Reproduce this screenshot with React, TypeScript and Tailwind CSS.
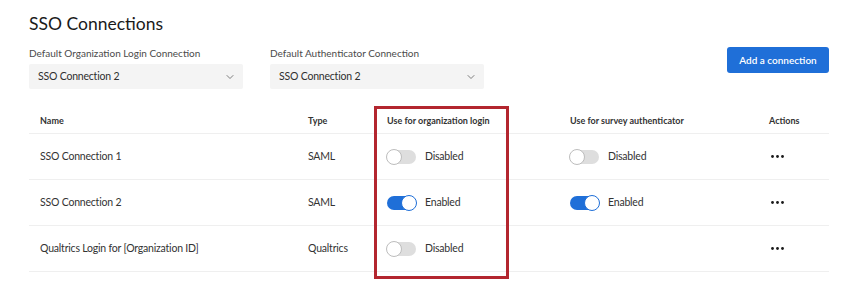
import { ChevronDown } from 'lucide-react'

type Row = {
  name: string
  type: string
  org: boolean
  survey: boolean | null
}

const rows: Row[] = [
  { name: 'SSO Connection 1', type: 'SAML', org: false, survey: false },
  { name: 'SSO Connection 2', type: 'SAML', org: true, survey: true },
  { name: 'Qualtrics Login for [Organization ID]', type: 'Qualtrics', org: false, survey: null },
]

function Toggle({ on }: { on: boolean }) {
  return (
    <div className="flex items-center gap-[9px]">
      <div
        className={
          on
            ? 'relative h-[14px] w-[29px] rounded-full bg-[#1f6fd8]'
            : 'relative h-[14px] w-[29px] rounded-full bg-[#dedede]'
        }
      >
        <div
          className={
            on
              ? 'absolute top-[-1px] right-[-1px] h-[16px] w-[16px] rounded-full border border-[#1f6fd8] bg-white'
              : 'absolute top-[-1px] left-[-1px] h-[16px] w-[16px] rounded-full border border-[#bdbdbd] bg-white'
          }
        />
      </div>
      <span>{on ? 'Enabled' : 'Disabled'}</span>
    </div>
  )
}

function Dots() {
  return (
    <svg width="13" height="3" viewBox="0 0 13 3" className="ml-[2px]">
      <circle cx="1.5" cy="1.5" r="1.4" fill="#1a1a1a" />
      <circle cx="6.5" cy="1.5" r="1.4" fill="#1a1a1a" />
      <circle cx="11.5" cy="1.5" r="1.4" fill="#1a1a1a" />
    </svg>
  )
}

function Select({ label }: { label: string }) {
  return (
    <div className="flex flex-col">
      <span className="text-[10px] leading-[14px] text-[#4a4a4a]">{label}</span>
      <div className="mt-[4px] flex h-[25px] w-[214px] items-center justify-between rounded-[2px] bg-[#f4f4f4] pl-[9px] pr-[7px] text-[10.5px] tracking-[-0.2px] text-[#2f2f2f]">
        <span>SSO Connection 2</span>
        <ChevronDown size={12} strokeWidth={1.5} className="text-[#555]" />
      </div>
    </div>
  )
}

export default function App() {
  return (
    <div className="h-[290px] w-[850px] bg-white pl-[29px] pr-[21px] pt-[10px] font-['Lato',sans-serif] text-[#333]">
      <h1 className="text-[17.5px] leading-[28px] text-[#1a1a1a]">SSO Connections</h1>

      <div className="mt-[8px] flex items-start justify-between">
        <div className="flex gap-[27px]">
          <Select label="Default Organization Login Connection" />
          <Select label="Default Authenticator Connection" />
        </div>
        <button className="mt-[1px] h-[26px] w-[102px] rounded-[3px] bg-[#1f6fd8] text-[10px] font-semibold text-white">
          Add a connection
        </button>
      </div>

      <div className="relative mt-[19px]">
        <div className="grid h-[26px] grid-cols-[268px_79px_183px_199px_1fr] items-center border-b border-[#efefef] pl-[11px] text-[9px] font-bold text-[#333]">
          <span>Name</span>
          <span>Type</span>
          <span>Use for organization login</span>
          <span>Use for survey authenticator</span>
          <span>Actions</span>
        </div>
        {rows.map((r) => (
          <div
            key={r.name}
            className="grid h-[46px] grid-cols-[268px_79px_183px_199px_1fr] items-center border-b border-[#efefef] pl-[11px] text-[10.5px] tracking-[-0.2px] text-[#333]"
          >
            <span>{r.name}</span>
            <span>{r.type}</span>
            <Toggle on={r.org} />
            {r.survey === null ? <span /> : <Toggle on={r.survey} />}
            <Dots />
          </div>
        ))}
        <div className="absolute top-[-2px] left-[345px] h-[173px] w-[135px] border-[3px] border-[#b3262f]" />
      </div>
    </div>
  )
}
